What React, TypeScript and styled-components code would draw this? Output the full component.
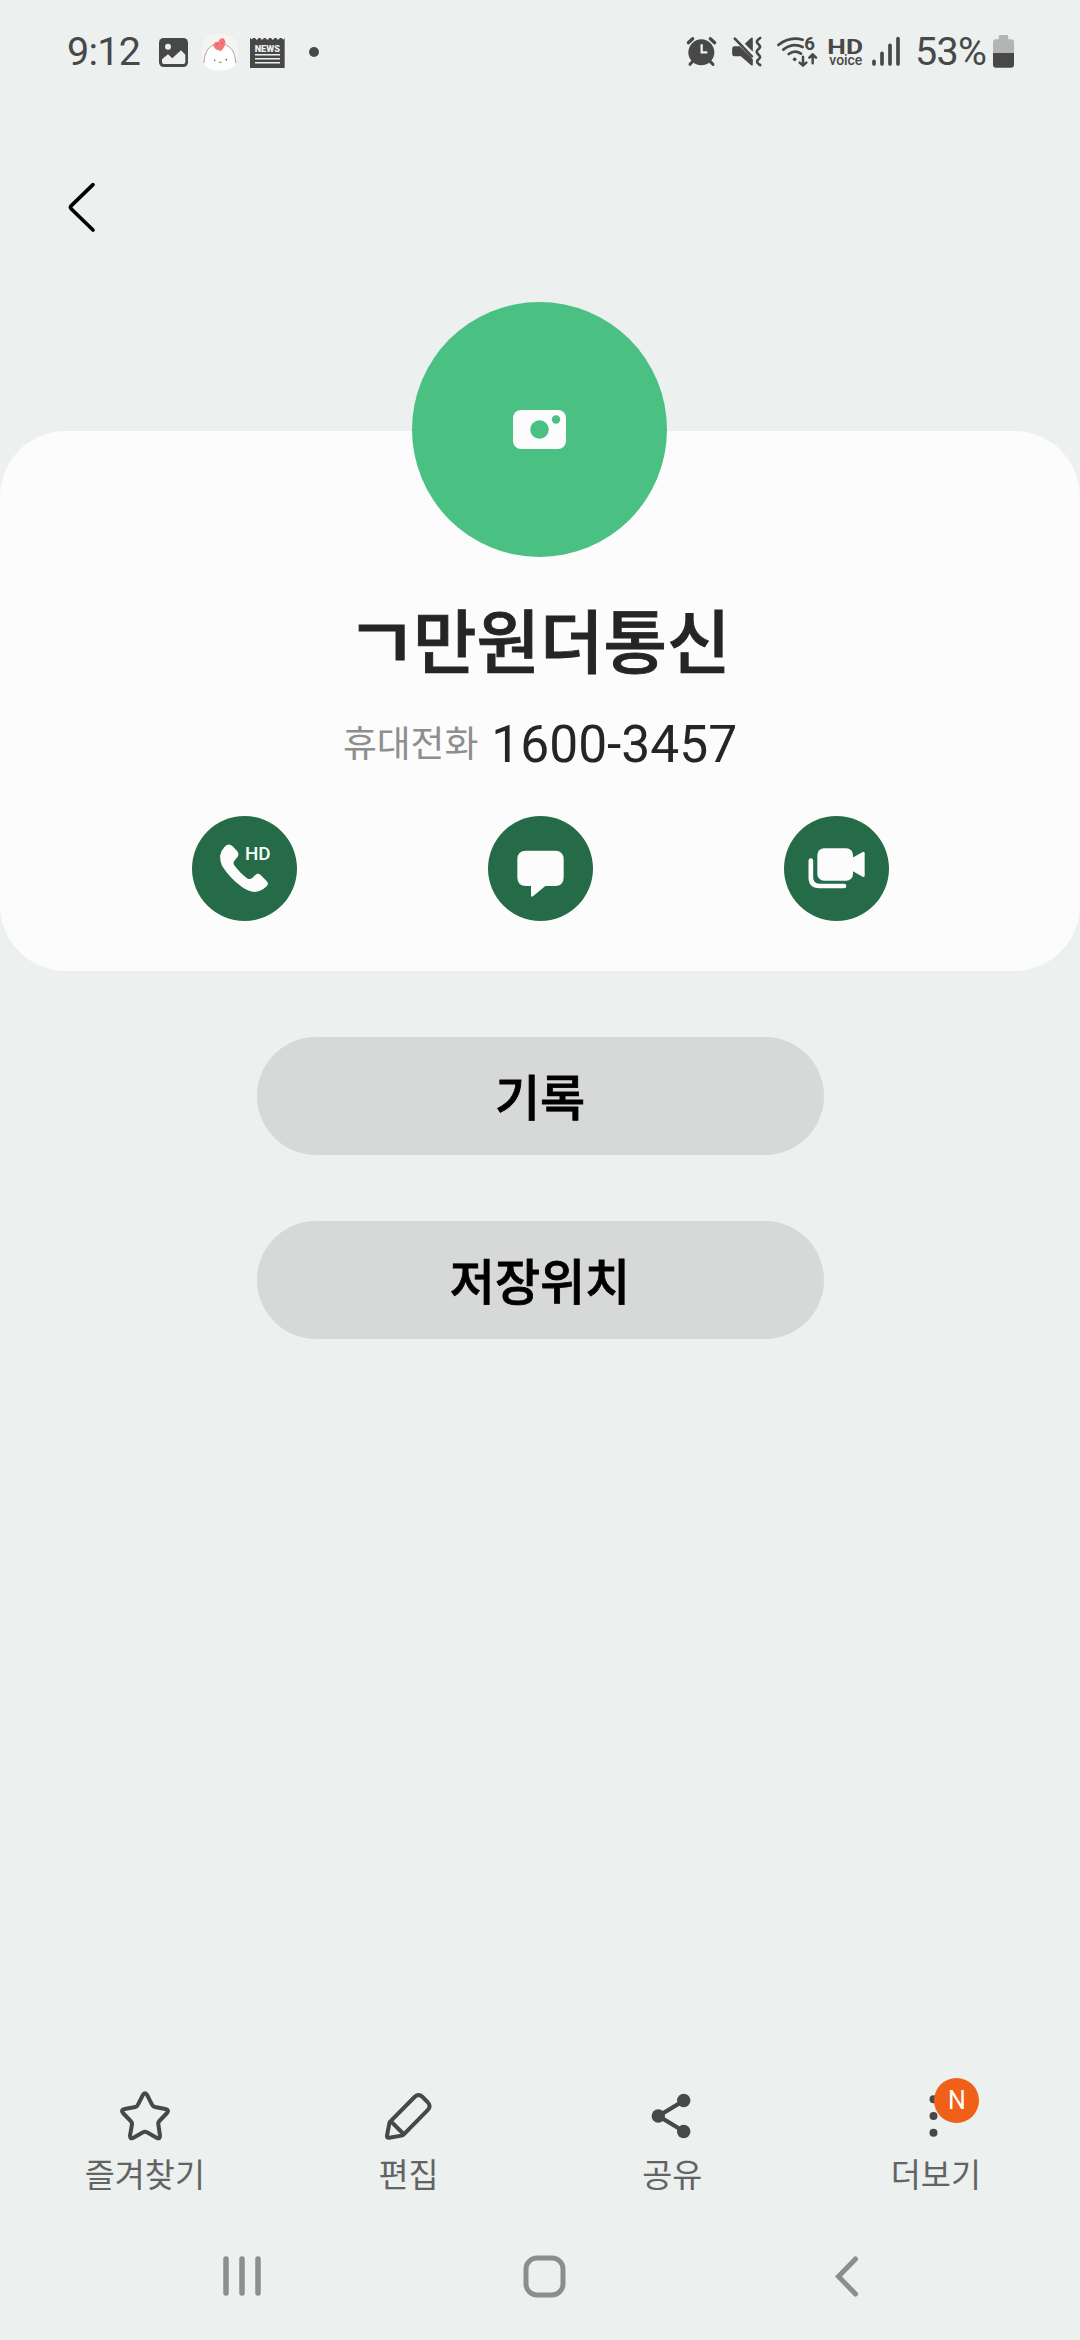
import React from 'react';
import styled, { createGlobalStyle } from 'styled-components';

const ink = '#484848';
const kr = `Roboto, "Noto Sans CJK KR", sans-serif`;

const Global = createGlobalStyle`
  * { box-sizing: border-box; }
  body { margin: 0; background: #ecf0ef; }
  svg { display: block; flex: none; overflow: visible; }
  button { border: 0; padding: 0; margin: 0; background: none; font: inherit; color: inherit; }
`;

const Screen = styled.div`
  width: 1080px;
  height: 2340px;
  display: flex;
  flex-direction: column;
  overflow: hidden;
  background: #ecf0ef;
  font-family: ${kr};
  color: #252525;
`;

const StatusBar = styled.header`
  height: 103.3px;
  padding: 0 66px 0 67px;
  display: flex;
  align-items: center;
  justify-content: space-between;
  color: ${ink};
`;

const StatusGroup = styled.div`
  display: flex;
  align-items: center;
`;

const StatusText = styled.span<{ $width: number; $gap?: number }>`
  width: ${(p) => p.$width}px;
  margin-left: ${(p) => p.$gap ?? 0}px;
  font-size: 39.5px;
  line-height: 44px;
  letter-spacing: -0.7px;
  white-space: nowrap;
`;

const Glyph = styled.svg<{ $gap?: number }>`
  height: 43.33px;
  margin-left: ${(p) => p.$gap ?? 0}px;
`;

const TopBar = styled.nav`
  height: 198.7px;
  padding: 80px 0 0 69px;
`;

const Card = styled.section`
  height: 540px;
  margin-top: 129px;
  border-radius: 66px;
  background: #fcfcfc;
  display: flex;
  flex-direction: column;
  align-items: center;
`;

const Avatar = styled.button`
  width: 255px;
  height: 255px;
  margin: -129px 1px 0 0;
  flex: none;
  border-radius: 50%;
  background: #4bc083;
  display: flex;
  align-items: center;
  justify-content: center;
`;

const Name = styled.h1`
  margin: 38px 0 0;
  display: flex;
  font-size: 69px;
  line-height: 100px;
  font-weight: 500;
  -webkit-text-stroke: 0.9px #252525;
  white-space: nowrap;
`;

const NameInitial = styled.span`
  transform: scale(1.14, 1.04);
`;

const PhoneLine = styled.div`
  margin-top: 20px;
  height: 60px;
  display: flex;
  align-items: center;
  gap: 13px;
`;

const PhoneKind = styled.span`
  margin-bottom: 7px;
  font-size: 36.8px;
  color: #8e8e8e;
`;

const PhoneNumber = styled.span`
  font-size: 51.5px;
`;

const CallActions = styled.div`
  width: 697px;
  margin-top: 41px;
  display: flex;
  justify-content: space-between;
`;

const RoundButton = styled.button`
  width: 105px;
  height: 105px;
  border-radius: 50%;
  background: #256b48;
`;

const Pills = styled.div`
  margin-top: 66px;
  display: flex;
  flex-direction: column;
  align-items: center;
  gap: 66px;
`;

const Pill = styled.button`
  width: 567px;
  height: 118px;
  border-radius: 59px;
  background: #d7d9d8;
  color: #000;
  font-size: 49px;
  font-weight: 500;
  -webkit-text-stroke: 0.8px #000;
  line-height: 118px;
  padding-top: 4px;
  font-family: ${kr};
`;

const Toolbar = styled.footer`
  margin-top: auto;
  height: 126px;
  padding: 0 12px 0 13px;
  display: grid;
  grid-template-columns: repeat(4, 263.7px);
`;

const Tool = styled.button`
  display: flex;
  flex-direction: column;
  align-items: center;
  font-family: ${kr};
`;

const ToolIcon = styled.div`
  position: relative;
  height: 60px;
  display: flex;
  align-items: center;
`;

const ToolLabel = styled.span`
  font-size: 32.7px;
  line-height: 61px;
  color: #636363;
`;

const Badge = styled.span`
  position: absolute;
  left: 20px;
  top: -8px;
  width: 45px;
  height: 45px;
  border-radius: 50%;
  background: #f06018;
  color: #fff;
  font-size: 25px;
  line-height: 46px;
  text-align: center;
`;

const SystemNav = styled.nav`
  height: 128px;
  padding: 0 83px 0 91px;
  display: grid;
  grid-template-columns: repeat(3, 302px);
  place-items: center;
`;

const ImageIcon = () => (
  <Glyph $gap={13} width="29" viewBox="357 60 87 130">
    <rect x="357" y="84" width="87" height="87" rx="14" fill={ink} />
    <circle cx="384" cy="110" r="9" fill="#ecf0ef" />
    <path d="M366 148 L384 133 L397 145 L423 121 L436 134 V156 Q436 162 430 162 H372 Q366 162 366 156Z" fill="#ecf0ef" />
  </Glyph>
);

const ChickIcon = () => (
  <Glyph $gap={14} width="36" viewBox="487 60 108 130">
    <rect x="487" y="72" width="107" height="110" rx="42" fill="#f4f4f3" />
    <path d="M493 158 C494 124 510 102 540 101 C573 102 587 126 588 158 C586 174 566 181 541 181 C514 181 494 174 493 158Z" fill="#fff" />
    <path d="M493 159 C494 124 510 102 540 101 C573 102 587 126 588 159" fill="none" stroke="#a58f80" strokeWidth="2.500" />
    <path d="M543 123 C530 121 519 113 522 103 C525 95 533 94 537 96 C537 86 550 81 555 89 C560 98 556 112 543 123Z" fill="#f8757c" />
    <path d="M528 103 q4 3 7-1 M544 99 q4 3 6-2" fill="none" stroke="#b04d50" strokeWidth="2" />
    <circle cx="525" cy="151" r="2.500" fill="#6f625c" />
    <circle cx="560" cy="149" r="2.500" fill="#6f625c" />
    <ellipse cx="542" cy="157" rx="4" ry="2.500" fill="#a58f60" />
  </Glyph>
);

const NewsIcon = () => (
  <Glyph $gap={12} width="35" viewBox="630 60 105 130">
    <path d="M630 84 l5 4 5-4 h5 l5 6 6-6 h5 l5 6 6-6 h5 l5 6 6-6 h5 l5 6 6-6 h5 l5 6 6-6 h5 l5 5 4-5 V174 H630Z" fill={ink} />
    <text x="682" y="125" textAnchor="middle" textLength="76" lengthAdjust="spacingAndGlyphs" fontFamily="Roboto, sans-serif" fontWeight="900" fontSize="27" fill="#ecf0ef">NEWS</text>
    <path d="M645 134.500H720M645 146.500H720M645 158.500H720" stroke="#ecf0ef" strokeWidth="4.500" />
  </Glyph>
);

const AlarmIcon = () => (
  <Glyph width="29" viewBox="48 60 87 130">
    <circle cx="91" cy="127" r="39" fill={ink} />
    <path d="M64 155 L57 163 M118 155 L126 163" stroke={ink} strokeWidth="9" strokeLinecap="round" />
    <path d="M52 98 L65 86 M131 98 L118 86" stroke={ink} strokeWidth="10" strokeLinecap="round" />
    <path d="M92 103 V127 H109" fill="none" stroke="#ecf0ef" strokeWidth="7" />
  </Glyph>
);

const MuteIcon = () => (
  <Glyph $gap={16} width="30" viewBox="183 60 89 130">
    <path d="M190 109 H206 L245 148 V163 Q245 170 239 165 L209 139 H190 Q183 139 183 132 V116 Q183 109 190 109Z" fill={ink} />
    <path d="M221 101 L239 84 Q245 80 245 87 V125Z" fill={ink} />
    <path d="M191 86 L242 139" stroke={ink} strokeWidth="8" strokeLinecap="round" />
    <path d="M267 84 C253 94 256 97 263 104 C270 110 266 114 260 119 C254 125 257 130 263 135 C270 141 266 145 260 150 C255 155 258 160 267 165" fill="none" stroke={ink} strokeWidth="8" strokeLinecap="round" />
  </Glyph>
);

const WifiIcon = () => (
  <Glyph $gap={15} width="40" viewBox="317 60 120 130">
    <g fill="none" stroke={ink} strokeWidth="8" strokeLinecap="round">
      <path d="M321 105 Q354 78 394 89" />
      <path d="M336 119 Q364 97 394 111" />
      <path d="M352 132 Q371 118 389 131" />
      <path d="M395 140 V166 M385 158 L395 167 L405 158" strokeWidth="7.500" strokeLinejoin="round" />
      <path d="M424 160 V134 M414 143 L424 133 L434 143" strokeWidth="7.500" strokeLinejoin="round" />
    </g>
    <circle cx="370" cy="148" r="5.500" fill={ink} />
    <text x="399" y="121" fontFamily="Roboto, sans-serif" fontWeight="700" fontSize="56" fill={ink}>6</text>
  </Glyph>
);

const HdVoiceIcon = () => (
  <Glyph $gap={12} width="33" viewBox="473 60 99 130" fontFamily="Roboto, sans-serif" fill={ink}>
    <text x="468" y="131" textLength="107" lengthAdjust="spacingAndGlyphs" fontWeight="700" fontSize="63">HD</text>
    <text x="474" y="164" textLength="99" lengthAdjust="spacingAndGlyphs" fontWeight="500" fontSize="44">voice</text>
  </Glyph>
);

const SignalIcon = () => (
  <Glyph $gap={10} width="28" viewBox="603 60 84 130">
    <path d="M609 154V162M633 130V162M657 106V162M681 86V162" stroke={ink} strokeWidth="11" strokeLinecap="round" />
  </Glyph>
);

const BatteryIcon = () => (
  <Glyph width="21" viewBox="966 60 63 130">
    <path d="M988 75 H1007 Q1012 75 1012 80 V88 H1020 Q1029 88 1029 97 V130 H966 V97 Q966 88 975 88 H983 V80 Q983 75 988 75Z" fill="#b3b5b4" />
    <path d="M966 129 H1029 V164 Q1029 173 1020 173 H975 Q966 173 966 164Z" fill={ink} />
  </Glyph>
);

const CallIcon = () => (
  <svg width="105" height="105" viewBox="0 0 315 315" fill="#fcfcfc">
    <path d="M98 92 Q110 80 121 90 L136 106 Q142 114 137 122 L127 134 Q122 141 127 148 Q145 173 167 188 Q174 191 181 186 L190 177 Q198 170 206 177 L223 194 Q232 203 224 211 Q206 228 187 228 Q170 227 150 213 Q113 186 90 149 Q84 136 84 120 Q87 103 98 92Z" />
    <text x="159" y="132" textLength="77" lengthAdjust="spacingAndGlyphs" fontFamily="Roboto, sans-serif" fontWeight="500" fontSize="57">HD</text>
  </svg>
);

const MessageIcon = () => (
  <svg width="105" height="105" viewBox="0 0 315 315" fill="#fcfcfc">
    <path d="M114 104 H201 Q227 104 227 130 V184 Q227 210 201 210 H172 L135 241 Q129 245 129 238 V210 H114 Q88 210 88 184 V130 Q88 104 114 104Z" />
  </svg>
);

const VideoIcon = () => (
  <svg width="105" height="105" viewBox="0 0 315 315" fill="#fcfcfc">
    <rect x="100" y="97" width="107" height="97" rx="20" />
    <path d="M204 126 L236 108 Q242 106 242 112 V178 Q242 185 236 182 L204 164Z" />
    <path d="M80.500 134 V184 Q80.500 210 106 210 H180" fill="none" stroke="#fcfcfc" strokeWidth="14" strokeLinecap="round" />
  </svg>
);

const CameraIcon = () => (
  <svg width="53" height="39" viewBox="0 0 53 39">
    <rect width="53" height="39" rx="8" fill="#fcfcfc" />
    <circle cx="26.500" cy="19.500" r="9.300" fill="#4bc083" />
    <circle cx="43" cy="9.500" r="4.200" fill="#4bc083" />
  </svg>
);

const StarIcon = () => (
  <svg width="50" height="50" viewBox="177 95 150 150" fill="none" stroke={ink} strokeWidth="12" strokeLinejoin="round">
    <path d="M245 108 Q252 96 259 108 L273 136 Q276 142 282 143 L313 149 Q326 152 318 161 L295 185 Q291 189 292 195 L297 229 Q297 240 288 236 L258 219 Q252 215 246 219 L216 236 Q207 240 207 229 L213 195 Q213 189 209 185 L186 161 Q178 152 191 149 L223 143 Q228 142 231 136Z" />
  </svg>
);

const PencilIcon = () => (
  <svg width="47" height="47" viewBox="978 101 140 140" fill="none" stroke={ink} strokeWidth="12" strokeLinejoin="round">
    <path d="M995 185 L1066 113 Q1078 102 1090 113 L1105 128 Q1117 140 1105 152 L1034 224 Q1031 227 1027 228 L990 234 Q983 235 984 228 L991 191 Q992 187 995 185Z M995 185 L1034 224" />
  </svg>
);

const ShareIcon = () => (
  <svg width="43" height="46" viewBox="0 0 43 46" fill={ink}>
    <path d="M33 7.500 L7.500 23 L33 38.500" fill="none" stroke={ink} strokeWidth="4.300" />
    <circle cx="7.300" cy="23" r="6.700" />
    <circle cx="32.700" cy="7.500" r="6.700" />
    <circle cx="32.700" cy="38.500" r="6.700" />
  </svg>
);

const MoreIcon = () => (
  <svg width="43" height="46" viewBox="0 0 43 46" fill={ink}>
    <circle cx="19.500" cy="6.300" r="4" />
    <circle cx="19.500" cy="23" r="4" />
    <circle cx="19.500" cy="39.700" r="4" />
  </svg>
);

const tools = [
  { label: '즐겨찾기', icon: <StarIcon /> },
  { label: '편집', icon: <PencilIcon /> },
  { label: '공유', icon: <ShareIcon /> },
  { label: '더보기', icon: <MoreIcon />, badge: 'N' },
];

export default function App() {
  return (
    <Screen>
      <Global />
      <StatusBar>
        <StatusGroup>
          <StatusText $width={79}>9:12</StatusText>
          <ImageIcon />
          <ChickIcon />
          <NewsIcon />
          <Glyph $gap={24} width="10" viewBox="807 60 30 130">
            <circle cx="822" cy="126" r="15" fill={ink} />
          </Glyph>
        </StatusGroup>
        <StatusGroup>
          <AlarmIcon />
          <MuteIcon />
          <WifiIcon />
          <HdVoiceIcon />
          <SignalIcon />
          <StatusText $gap={15} $width={78}>53%</StatusText>
          <BatteryIcon />
        </StatusGroup>
      </StatusBar>
      <TopBar>
        <svg width="26" height="49" viewBox="87 519 78 147">
          <path d="M159 524 L94 587 Q89 592 94 597 L159 660" fill="none" stroke="#000" strokeWidth="11" strokeLinecap="round" />
        </svg>
      </TopBar>
      <Card>
        <Avatar><CameraIcon /></Avatar>
        <Name><NameInitial>ㄱ</NameInitial>만원더통신</Name>
        <PhoneLine>
          <PhoneKind>휴대전화</PhoneKind>
          <PhoneNumber>1600-3457</PhoneNumber>
        </PhoneLine>
        <CallActions>
          <RoundButton><CallIcon /></RoundButton>
          <RoundButton><MessageIcon /></RoundButton>
          <RoundButton><VideoIcon /></RoundButton>
        </CallActions>
      </Card>
      <Pills>
        <Pill>기록</Pill>
        <Pill>저장위치</Pill>
      </Pills>
      <Toolbar>
        {tools.map((t) => (
          <Tool key={t.label}>
            <ToolIcon>
              {t.icon}
              {t.badge && <Badge>{t.badge}</Badge>}
            </ToolIcon>
            <ToolLabel>{t.label}</ToolLabel>
          </Tool>
        ))}
      </Toolbar>
      <SystemNav>
        <svg width="40" height="40" viewBox="0 0 40 40">
          <path d="M4 3V37M20 3V37M36 3V37" stroke="#8c8e8d" strokeWidth="5.500" strokeLinecap="round" />
        </svg>
        <svg width="43" height="43" viewBox="0 0 43 43">
          <rect x="3" y="3" width="37" height="37" rx="11" fill="none" stroke="#8c8e8d" strokeWidth="5" />
        </svg>
        <svg width="23" height="41" viewBox="0 0 23 41">
          <path d="M20.500 3 L3.500 20.500 L20.500 38" fill="none" stroke="#8c8e8d" strokeWidth="5" strokeLinecap="round" />
        </svg>
      </SystemNav>
    </Screen>
  );
}
